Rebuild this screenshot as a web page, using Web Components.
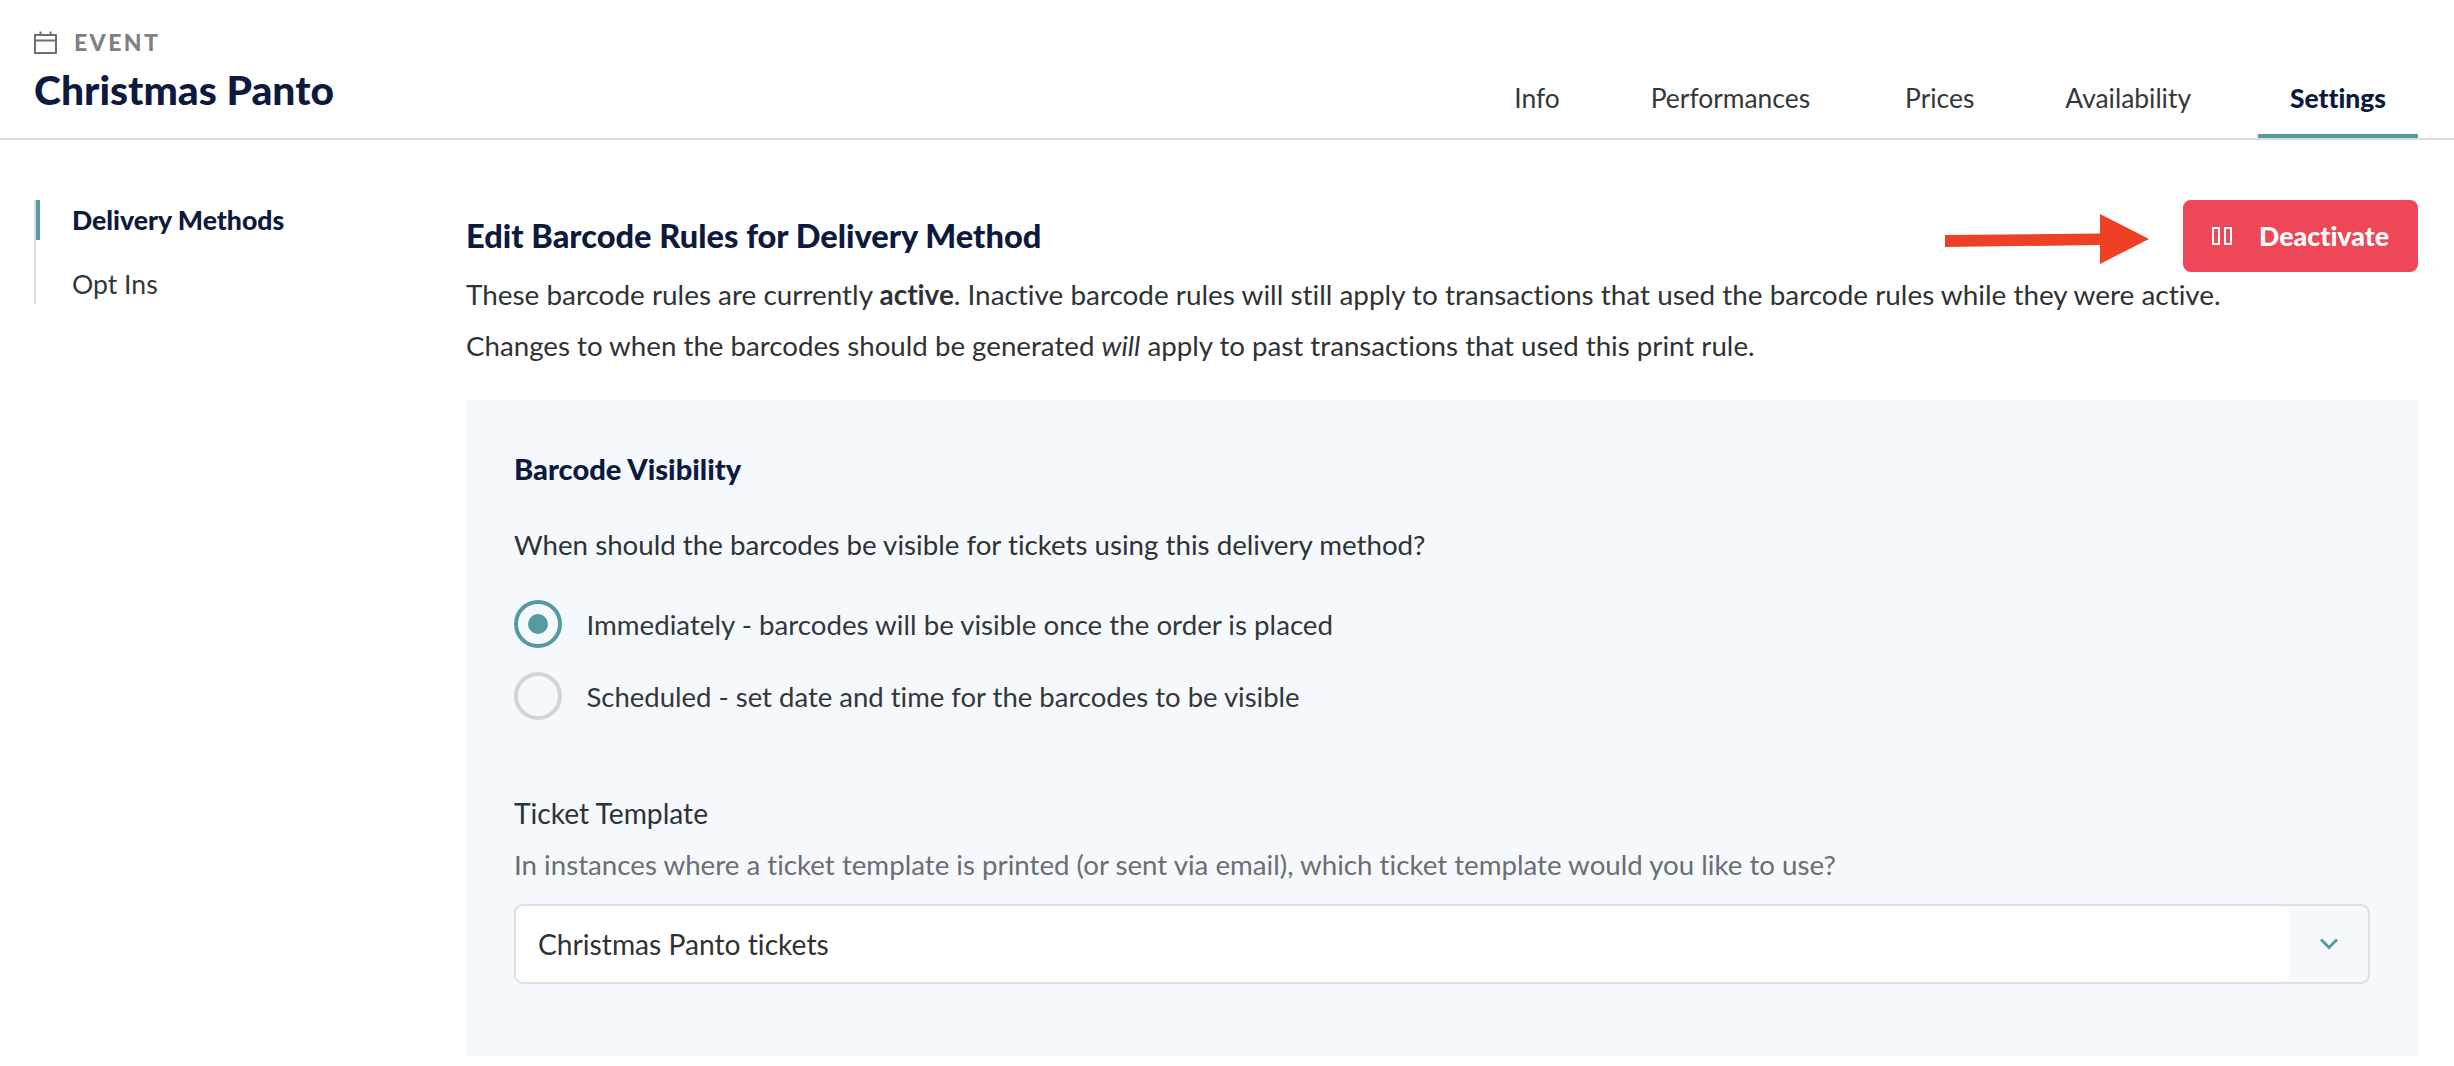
<!DOCTYPE html>
<html>
<head>
<meta charset="utf-8">
<title>Christmas Panto</title>
<style>
  html, body { margin: 0; height: 100%; background: #fff; overflow: hidden; }
  body { font-family: Lato, "Liberation Sans", sans-serif; font-size: 27.7px; color: #2f3234; font-variant-ligatures: none; }
</style>
</head>
<body>
<event-page></event-page>

<script>
const NAVY = '#0d1a3e'
const TEAL = '#559aa1'

class EventHeader extends HTMLElement {
    constructor() {
        super()
        this.attachShadow({ mode: 'open' }).innerHTML = `
        <style>
            :host { display: flex; justify-content: space-between; align-items: flex-end; box-sizing: border-box; height: 140px; padding: 0 36px 0 34px; border-bottom: 2px solid #dcdcdc; }
            .kicker { display: flex; align-items: center; gap: 17px; height: 24px; margin-top: 30px; color: #808080; font-weight: 900; font-size: 23px; letter-spacing: 2.4px; line-height: 24px; }
            svg { display: block; }
            h1 { margin: 12px 0 0 0; color: ${NAVY}; font-size: 40.8px; line-height: 48px; font-weight: 900; }
            .titles { align-self: flex-start; }
            nav { display: flex; gap: 27px; }
        </style>
        <div class="titles">
            <div class="kicker">
                <svg width="23" height="23" viewBox="0 0 23 23" fill="none" stroke="#6f6f6f" stroke-width="2"><rect x="1" y="4" width="21" height="18"/><path d="M1 9.5h21M6.5 0.5v4M16.5 0.5v4"/></svg>
                <span>EVENT</span>
            </div>
            <h1>Christmas Panto</h1>
        </div>
        <nav><slot></slot></nav>`
    }
}

class TabItem extends HTMLElement {
    constructor() {
        super()
        this.attachShadow({ mode: 'open' }).innerHTML = `
        <style>
            :host { display: block; box-sizing: border-box; height: 58px; padding: 0 32px; line-height: 36px; font-size: 26.4px; color: #34373a; white-space: nowrap; }
            :host([active]) { color: ${NAVY}; font-weight: 900; border-bottom: 4px solid ${TEAL}; margin-left: 8px; }
        </style>
        <slot></slot>`
    }
}

class SideNav extends HTMLElement {
    constructor() {
        super()
        this.attachShadow({ mode: 'open' }).innerHTML = `
        <style>
            :host { display: flex; flex-direction: column; box-sizing: border-box; align-self: flex-start; width: 432px; height: 104px; margin-left: 34px; border-left: 2px solid #dcdcdc; }
        </style>
        <slot></slot>`
    }
}

class SideLink extends HTMLElement {
    constructor() {
        super()
        this.attachShadow({ mode: 'open' }).innerHTML = `
        <style>
            :host { display: block; position: relative; height: 40px; padding-left: 36px; margin-bottom: 24px; line-height: 40px; font-size: 26.6px; color: #34373a; }
            :host([active]) { color: ${NAVY}; font-weight: 900; }
            :host([active])::before { content: ""; position: absolute; left: 0; top: 0; width: 4px; height: 40px; background: ${TEAL}; }
        </style>
        <slot></slot>`
    }
}

class ActionButton extends HTMLElement {
    constructor() {
        super()
        this.attachShadow({ mode: 'open' }).innerHTML = `
        <style>
            :host { display: flex; align-items: center; gap: 27px; box-sizing: border-box; width: 235px; height: 72px; padding-left: 29px; border-radius: 8px; background: #ee4757; color: #fff; font-weight: 900; font-size: 26.8px; }
            svg { display: block; }
        </style>
        <svg width="20" height="18" viewBox="0 0 20 18" fill="none" stroke="#fff" stroke-width="2"><rect x="1" y="1" width="6" height="16"/><rect x="13" y="1" width="6" height="16"/></svg>
        <span><slot></slot></span>`
    }
}

class CalloutArrow extends HTMLElement {
    constructor() {
        super()
        this.attachShadow({ mode: 'open' }).innerHTML = `
        <style>
            :host { display: block; width: 204px; height: 50px; margin-top: 6px; }
            svg { display: block; }
        </style>
        <svg width="204" height="50" viewBox="0 0 204 50"><path d="M0 21 L155 19.5 L155 0 L204 25 L155 50 L155 31 L0 33 Z" fill="#ec4124"/></svg>`
    }
}

class RadioOption extends HTMLElement {
    constructor() {
        super()
        this.attachShadow({ mode: 'open' }).innerHTML = `
        <style>
            :host { display: flex; align-items: center; gap: 24.5px; height: 48px; font-size: 27.7px; color: #34373a; }
            i { display: flex; align-items: center; justify-content: center; box-sizing: border-box; width: 48px; height: 48px; border: 4.5px solid #d1d5d9; border-radius: 50%; }
            :host([checked]) i { border-color: ${TEAL}; }
            :host([checked]) i::after { content: ""; width: 20px; height: 20px; border-radius: 50%; background: ${TEAL}; }
            span { padding-top: 2px; }
        </style>
        <i></i><span><slot></slot></span>`
    }
}

class SelectField extends HTMLElement {
    constructor() {
        super()
        this.attachShadow({ mode: 'open' }).innerHTML = `
        <style>
            :host { display: flex; box-sizing: border-box; height: 80px; border: 2px solid #dddfe2; border-radius: 9px; font-size: 28.2px; color: #2f3234; }
            .value { flex: 1; display: flex; align-items: center; padding-left: 22px; background: #fff; border-radius: 7px; }
            .caret { display: flex; align-items: center; justify-content: center; width: 79px; }
            svg { display: block; }
        </style>
        <div class="value"><slot></slot></div>
        <div class="caret"><svg width="18" height="12" viewBox="0 0 18 12" fill="none" stroke="${TEAL}" stroke-width="3"><path d="M1 1.5 L9 9.5 L17 1.5"/></svg></div>`
    }
}

class EventPage extends HTMLElement {
    constructor() {
        super()
        this.attachShadow({ mode: 'open' }).innerHTML = `
        <style>
            :host { display: block; font-size: 27.7px; color: #2f3234; line-height: 40px; }
            .body { display: flex; padding-top: 60px; }
            main { width: 1952px; }
            .head { display: flex; justify-content: space-between; align-items: center; height: 72px; }
            h2 { margin: 0; color: ${NAVY}; font-size: 32.6px; font-weight: 900; line-height: 40px; }
            .right { display: flex; align-items: center; gap: 34px; }
            p { margin: 0; }
            .intro { margin-top: -4px; }
            .intro p { height: 52px; line-height: 52px; }
            .intro p:first-child { font-size: 27.9px; }
            .panel { box-sizing: border-box; height: 656px; margin-top: 28px; padding: 48px 48px 0 48px; background: #f5f8fd; }
            h3 { margin: 0; color: ${NAVY}; font-size: 29.1px; font-weight: 900; line-height: 42px; }
            .q { margin-top: 35px; line-height: 40px; }
            .radios { display: flex; flex-direction: column; gap: 24px; margin-top: 35px; }
            .label { margin-top: 73px; line-height: 40px; font-size: 28.2px; }
            .hint { margin-top: 12px; color: #6b6e72; line-height: 40px; }
            select-field { margin-top: 19px; }
        </style>
        <event-header>
            <tab-item>Info</tab-item>
            <tab-item>Performances</tab-item>
            <tab-item style="margin-left: 4px">Prices</tab-item>
            <tab-item>Availability</tab-item>
            <tab-item active>Settings</tab-item>
        </event-header>
        <div class="body">
            <side-nav>
                <side-link active>Delivery Methods</side-link>
                <side-link>Opt Ins</side-link>
            </side-nav>
            <main>
                <div class="head">
                    <h2>Edit Barcode Rules for Delivery Method</h2>
                    <div class="right">
                        <callout-arrow></callout-arrow>
                        <action-button>Deactivate</action-button>
                    </div>
                </div>
                <div class="intro">
                    <p>These barcode rules are currently <b>active</b>. Inactive barcode rules will still apply to transactions that used the barcode rules while they were active.</p>
                    <p>Changes to when the barcodes should be generated <i>will</i> apply to past transactions that used this print rule.</p>
                </div>
                <section class="panel">
                    <h3>Barcode Visibility</h3>
                    <p class="q">When should the barcodes be visible for tickets using this delivery method?</p>
                    <div class="radios">
                        <radio-option checked>Immediately - barcodes will be visible once the order is placed</radio-option>
                        <radio-option style="font-size: 27.5px">Scheduled - set date and time for the barcodes to be visible</radio-option>
                    </div>
                    <div class="label">Ticket Template</div>
                    <div class="hint">In instances where a ticket template is printed (or sent via email), which ticket template would you like to use?</div>
                    <select-field>Christmas Panto tickets</select-field>
                </section>
            </main>
        </div>`
    }
}

customElements.define('event-header', EventHeader)
customElements.define('tab-item', TabItem)
customElements.define('side-nav', SideNav)
customElements.define('side-link', SideLink)
customElements.define('action-button', ActionButton)
customElements.define('callout-arrow', CalloutArrow)
customElements.define('radio-option', RadioOption)
customElements.define('select-field', SelectField)
customElements.define('event-page', EventPage)
</script>
</body>
</html>
